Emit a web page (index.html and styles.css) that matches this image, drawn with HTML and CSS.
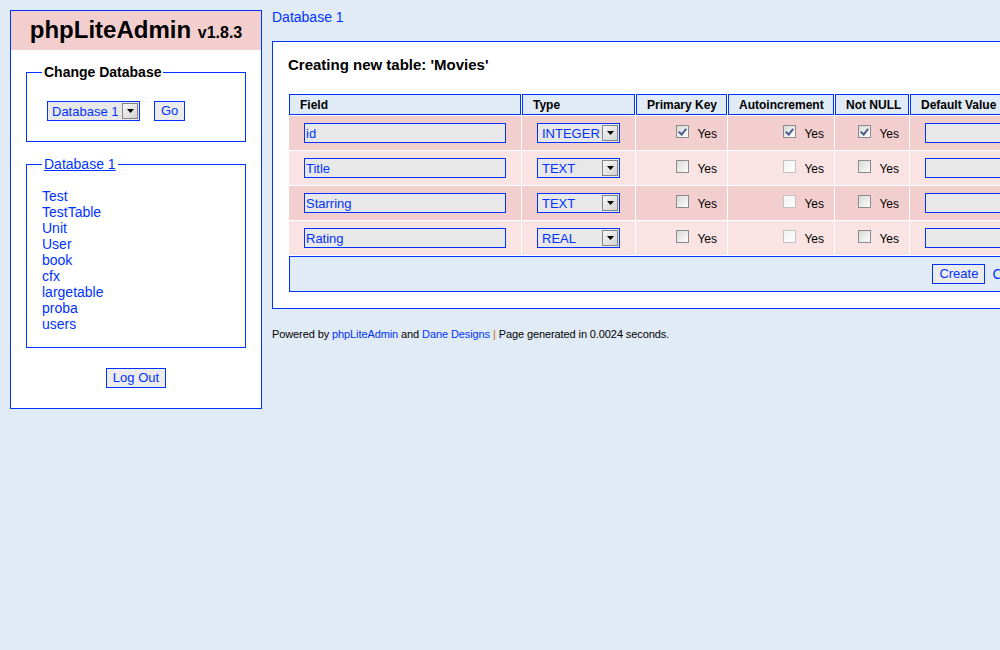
FILE: index.html
```html
<!DOCTYPE html>
<html>
<head>
<meta charset="utf-8">
<title>phpLiteAdmin</title>
<link rel="stylesheet" href="styles.css">
</head>
<body>
<div class="page">
  <div class="sidebar">
    <div class="sidebar-head"><span class="app-name">phpLiteAdmin</span> <span class="version">v1.8.3</span></div>
    <div class="sidebar-body">
      <fieldset class="fs">
        <legend class="fs-legend">Change Database</legend>
        <div class="db-form">
          <span class="sel sel-db"><select><option>Database 1</option></select><span class="sel-arrow"><svg width="7" height="4" viewBox="0 0 7 4"><polygon points="0,0 7,0 3.5,4" fill="#000"/></svg></span></span>
          <button class="btn">Go</button>
        </div>
      </fieldset>
      <fieldset class="fs">
        <legend class="fs-legend link-legend"><a href="#">Database 1</a></legend>
        <a class="table-link" href="#">Test</a>
        <a class="table-link" href="#">TestTable</a>
        <a class="table-link" href="#">Unit</a>
        <a class="table-link" href="#">User</a>
        <a class="table-link" href="#">book</a>
        <a class="table-link" href="#">cfx</a>
        <a class="table-link" href="#">largetable</a>
        <a class="table-link" href="#">proba</a>
        <a class="table-link" href="#">users</a>
      </fieldset>
      <div class="logout-row"><button class="btn">Log Out</button></div>
    </div>
  </div>
  <div class="main">
    <a class="crumb" href="#">Database 1</a>
    <div class="main-box">
      <h2 class="main-title">Creating new table: 'Movies'</h2>
      <table class="create-table">
        <thead>
          <tr>
            <th class="c-field">Field</th>
            <th class="c-type">Type</th>
            <th class="c-pk">Primary Key</th>
            <th class="c-ai">Autoincrement</th>
            <th class="c-nn">Not NULL</th>
            <th class="c-dv">Default Value</th>
          </tr>
        </thead>
        <tbody>
          <tr class="row1">
            <td><input class="txt" type="text" value="id"></td>
            <td><span class="sel sel-type"><select><option>INTEGER</option></select><span class="sel-arrow"><svg width="7" height="4" viewBox="0 0 7 4"><polygon points="0,0 7,0 3.5,4" fill="#000"/></svg></span></span></td>
            <td class="cb-cell"><input class="cb" type="checkbox" checked> Yes</td>
            <td class="cb-cell"><input class="cb" type="checkbox" checked> Yes</td>
            <td class="cb-cell"><input class="cb" type="checkbox" checked> Yes</td>
            <td><input class="txt txt-dv" type="text"></td>
          </tr>
          <tr class="row2">
            <td><input class="txt" type="text" value="Title"></td>
            <td><span class="sel sel-type"><select><option>TEXT</option></select><span class="sel-arrow"><svg width="7" height="4" viewBox="0 0 7 4"><polygon points="0,0 7,0 3.5,4" fill="#000"/></svg></span></span></td>
            <td class="cb-cell"><input class="cb" type="checkbox"> Yes</td>
            <td class="cb-cell"><input class="cb" type="checkbox" disabled> Yes</td>
            <td class="cb-cell"><input class="cb" type="checkbox"> Yes</td>
            <td><input class="txt txt-dv" type="text"></td>
          </tr>
          <tr class="row1">
            <td><input class="txt" type="text" value="Starring"></td>
            <td><span class="sel sel-type"><select><option>TEXT</option></select><span class="sel-arrow"><svg width="7" height="4" viewBox="0 0 7 4"><polygon points="0,0 7,0 3.5,4" fill="#000"/></svg></span></span></td>
            <td class="cb-cell"><input class="cb" type="checkbox"> Yes</td>
            <td class="cb-cell"><input class="cb" type="checkbox" disabled> Yes</td>
            <td class="cb-cell"><input class="cb" type="checkbox"> Yes</td>
            <td><input class="txt txt-dv" type="text"></td>
          </tr>
          <tr class="row2">
            <td><input class="txt" type="text" value="Rating"></td>
            <td><span class="sel sel-type"><select><option>REAL</option></select><span class="sel-arrow"><svg width="7" height="4" viewBox="0 0 7 4"><polygon points="0,0 7,0 3.5,4" fill="#000"/></svg></span></span></td>
            <td class="cb-cell"><input class="cb" type="checkbox"> Yes</td>
            <td class="cb-cell"><input class="cb" type="checkbox" disabled> Yes</td>
            <td class="cb-cell"><input class="cb" type="checkbox"> Yes</td>
            <td><input class="txt txt-dv" type="text"></td>
          </tr>
          <tr>
            <td class="foot" colspan="6"><button class="btn">Create</button><a class="cancel" href="#">Cancel</a></td>
          </tr>
        </tbody>
      </table>
    </div>
    <div class="powered">Powered by <a href="#">phpLiteAdmin</a> and <a href="#">Dane Designs</a> <span class="sep">|</span> Page generated in 0.0024 seconds.</div>
  </div>
</div>
</body>
</html>
```
FILE: styles.css
```css
html {
  overflow: hidden;
}
body {
  margin: 0;
  background: #e0ebf6;
  font-family: "Liberation Sans", Arial, sans-serif;
  font-size: 14px;
  color: #000;
}
a {
  color: #03f;
  text-decoration: none;
}
.page {
  display: flex;
  align-items: flex-start;
  gap: 10px;
  padding: 10px;
}
.sidebar {
  flex: 0 0 252px;
  box-sizing: border-box;
  border: 1px solid #03f;
  background: #fff;
}
.sidebar-head {
  box-sizing: border-box;
  height: 39px;
  padding-top: 5px;
  background: #f3cece;
  text-align: center;
  font-weight: bold;
  font-size: 24px;
  line-height: 28px;
  overflow: hidden;
}
.version {
  font-size: 16px;
  line-height: 1;
}
.sidebar-body {
  padding: 14px 15px 20px;
}
.fs {
  margin: 0;
  min-width: 0;
  border: 1px solid #03f;
  padding: 16px 15px 15px;
}
.fs + .fs {
  margin-top: 14px;
}
.fs-legend {
  padding: 0 2px;
  font-size: 14px;
  font-weight: bold;
  line-height: 16px;
}
.link-legend {
  font-weight: normal;
}
.link-legend a {
  text-decoration: underline;
}
.db-form {
  display: flex;
  align-items: center;
  gap: 14px;
  padding: 5px;
}
.table-link {
  display: block;
  line-height: 16px;
}
.logout-row {
  margin-top: 20px;
  text-align: center;
}
.btn {
  box-sizing: border-box;
  height: 20px;
  margin: 0;
  padding: 0 6px;
  border: 1px solid #03f;
  background: #ececec;
  color: #03f;
  font-family: "Liberation Sans", Arial, sans-serif;
  font-size: 13px;
  line-height: 18px;
  vertical-align: top;
}
.sel {
  display: flex;
  align-items: center;
  box-sizing: border-box;
  height: 20px;
  padding: 1px;
  border: 1px solid #03f;
  background: #e8e8e8;
}
.sel-db {
  width: 93px;
}
.sel-type {
  width: 83px;
}
.sel select {
  -webkit-appearance: none;
  appearance: none;
  flex: 1;
  min-width: 0;
  box-sizing: border-box;
  height: 16px;
  margin: 0;
  padding: 1px 0 0 3px;
  border: 0;
  background: transparent;
  color: #03f;
  font-family: "Liberation Sans", Arial, sans-serif;
  font-size: 13px;
  line-height: 15px;
  outline: none;
}
.sel-arrow {
  display: flex;
  align-items: center;
  justify-content: center;
  box-sizing: border-box;
  width: 16px;
  height: 16px;
  border: 1px solid #858585;
  background: linear-gradient(135deg, #f7f7f7, #d2d2d2);
}
.main {
  flex: 0 0 auto;
}
.crumb {
  display: block;
  line-height: 15px;
  margin-bottom: 16px;
}
.main-box {
  border: 1px solid #03f;
  background: #fff;
  padding: 15px;
}
.main-title {
  margin: 0 0 20px;
  font-size: 15px;
  line-height: 16px;
  font-weight: bold;
}
.create-table {
  border-collapse: separate;
  border-spacing: 1px;
  table-layout: fixed;
  width: 755px;
}
.create-table th {
  background: #e0ebf6;
  border: 1px solid #03f;
  padding: 3px 10px 1px;
  font-size: 12px;
  line-height: 15px;
  text-align: left;
  white-space: nowrap;
  overflow: hidden;
}
.c-field { width: 210px; }
.c-type { width: 91px; }
.c-pk { width: 69px; }
.c-ai { width: 84px; }
.c-nn { width: 52px; }
.c-dv { width: 110px; }
.create-table td {
  padding: 7px 15px;
  vertical-align: middle;
}
.row1 td {
  background: #f2cece;
}
.row2 td {
  background: #f9e3e3;
}
.create-table td.cb-cell {
  padding-right: 10px;
  text-align: right;
  font-size: 12px;
  line-height: 15px;
  white-space: nowrap;
}
.txt {
  display: block;
  box-sizing: border-box;
  width: 202px;
  height: 20px;
  margin: 0;
  padding: 1px 1px 0;
  border: 1px solid #03f;
  background: #e8e8e8;
  color: #03f;
  font-family: "Liberation Sans", Arial, sans-serif;
  font-size: 13px;
  outline: none;
}
.txt-dv {
  width: 102px;
}
.cb {
  -webkit-appearance: none;
  appearance: none;
  position: relative;
  box-sizing: border-box;
  width: 13px;
  height: 13px;
  margin: 0 5px 0 0;
  border: 1px solid #8a8b8c;
  background: linear-gradient(135deg, #d9d9d4, #fcfcfc);
  vertical-align: 0;
}
.cb:checked::after {
  content: "";
  position: absolute;
  left: 3px;
  top: 1px;
  width: 3px;
  height: 6px;
  border: solid #4c5d8e;
  border-width: 0 2px 2px 0;
  transform: rotate(40deg);
}
.cb:disabled {
  border-color: #c2c2c2;
  background: linear-gradient(135deg, #f2f2f2, #ffffff);
}
.create-table td.foot {
  padding: 7px 5px 7px 0;
  border: 1px solid #03f;
  background: #e0ebf6;
  text-align: right;
  font-size: 14px;
  line-height: 20px;
}
.cancel {
  margin-left: 7px;
  vertical-align: top;
}
.powered {
  margin-top: 19px;
  font-size: 11px;
  line-height: 13px;
  letter-spacing: -0.1px;
}
.sep {
  color: #c60;
}
```
